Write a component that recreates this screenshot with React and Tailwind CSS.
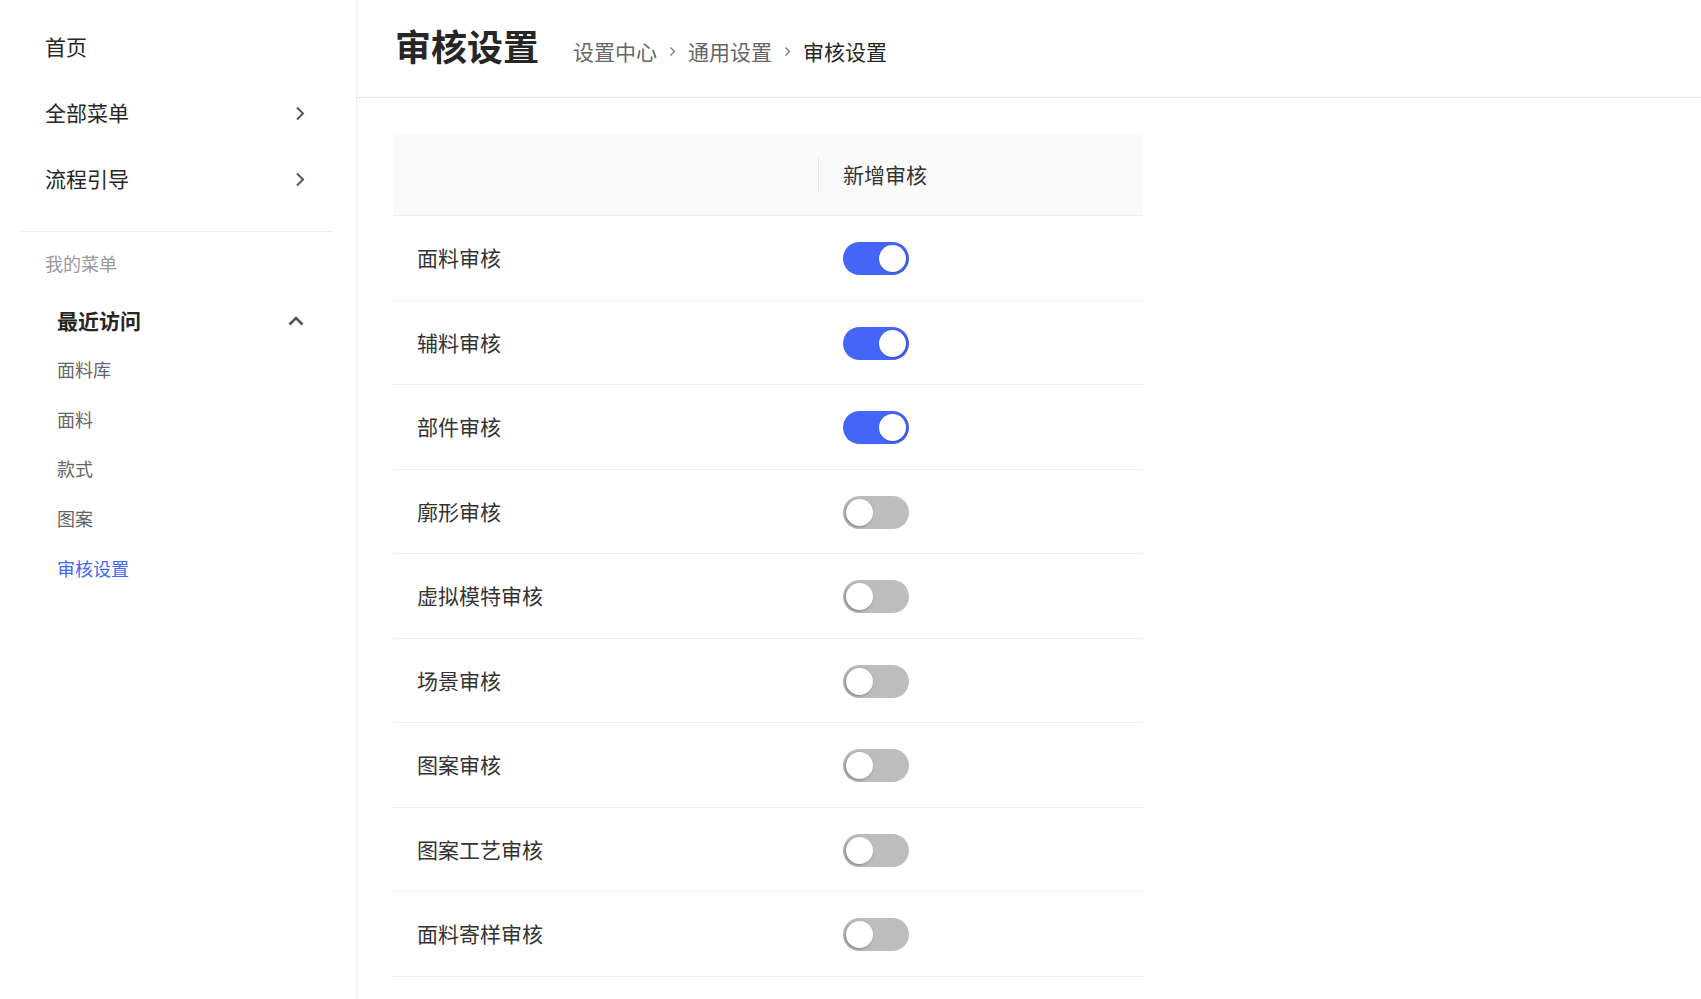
import React, { useState } from "react";

const rows = [
  { name: "面料审核", on: true },
  { name: "辅料审核", on: true },
  { name: "部件审核", on: true },
  { name: "廓形审核", on: false },
  { name: "虚拟模特审核", on: false },
  { name: "场景审核", on: false },
  { name: "图案审核", on: false },
  { name: "图案工艺审核", on: false },
  { name: "面料寄样审核", on: false },
];

const recent = ["面料库", "面料", "款式", "图案", "审核设置"];

function ChevronRight() {
  return (
    <svg width="10" height="15" viewBox="0 0 10 15" className="mt-[2px] text-[#555]">
      <polyline points="2,1.5 8,7.5 2,13.5" fill="none" stroke="currentColor" strokeWidth="2" />
    </svg>
  );
}

function ChevronUp() {
  return (
    <svg width="16" height="10" viewBox="0 0 16 10" className="text-[#555]">
      <polyline points="1.5,8.5 8,2 14.5,8.5" fill="none" stroke="currentColor" strokeWidth="2.6" />
    </svg>
  );
}

function Crumb() {
  return (
    <svg width="7" height="11" viewBox="0 0 7 11" className="mx-[12px] text-[#777]">
      <polyline points="1.5,1.5 5.5,5.5 1.5,9.5" fill="none" stroke="currentColor" strokeWidth="1.3" />
    </svg>
  );
}

function Switch({ checked, onChange }) {
  return (
    <button
      type="button"
      onClick={onChange}
      className={`relative block w-[66px] h-[33px] rounded-full transition-colors ${
        checked ? "bg-[#4565f8]" : "bg-[#bdbdbd]"
      }`}
    >
      <span
        className={`absolute top-[3px] w-[27px] h-[27px] rounded-full bg-white transition-all ${
          checked
            ? "left-[36px] shadow-[1px_1px_3px_rgba(0,0,0,0.2)]"
            : "left-[3px] shadow-[-1px_1px_3px_rgba(0,0,0,0.35)]"
        }`}
      />
    </button>
  );
}

export default function App() {
  const [items, setItems] = useState(rows);

  const toggle = (i) =>
    setItems(items.map((r, idx) => (idx === i ? { ...r, on: !r.on } : r)));

  return (
    <div className="flex h-screen bg-white text-[#333] font-['Noto_Sans_CJK_SC',sans-serif]">
      {/* ===== Sidebar ===== */}
      <aside className="w-[357px] shrink-0 border-r border-[#eeeeee] pt-[13.5px]">
        <div className="h-[66px] flex items-center pl-[45px] text-[21px] text-[#262626]">首页</div>
        <div className="h-[66px] flex items-center justify-between pl-[45px] pr-[51px] text-[21px] text-[#262626]">
          <span>全部菜单</span>
          <ChevronRight />
        </div>
        <div className="h-[66px] flex items-center justify-between pl-[45px] pr-[51px] text-[21px] text-[#262626]">
          <span>流程引导</span>
          <ChevronRight />
        </div>

        <div className="mt-[19px] mx-[21px] w-[311px] border-t border-[#eeeeee]" />

        <div className="h-[64px] flex items-center pl-[45px] text-[18px] text-[#999]">我的菜单</div>

        <div className="h-[49px] flex items-center justify-between pl-[57px] pr-[52px] pt-[1px]">
          <span className="text-[21px] font-bold text-[#262626]">最近访问</span>
          <ChevronUp />
        </div>
        {recent.map((r) => (
          <div
            key={r}
            className={`h-[49.75px] flex items-center pl-[57px] text-[18px] ${
              r === "审核设置" ? "text-[#4565f8]" : "text-[#666]"
            }`}
          >
            {r}
          </div>
        ))}
      </aside>

      {/* ===== Main ===== */}
      <main className="flex-1">
        <header className="h-[98px] border-b border-[#e8e8e8] flex items-start pl-[38px] pt-[27px]">
          <h1 className="text-[36px] leading-none font-bold text-[#262626]">审核设置</h1>
          <div className="ml-[34px] pt-[14px] flex items-center text-[21px] leading-none">
            <span className="text-[#666]">设置中心</span>
            <Crumb />
            <span className="text-[#666]">通用设置</span>
            <Crumb />
            <span className="text-[#262626]">审核设置</span>
          </div>
        </header>

        <div className="pl-[36px] pt-[36px]">
          <div className="w-[750px]">
            <div className="h-[82px] flex items-center bg-[#fafafa] rounded-t-[4px] border-b border-[#eeeeee]">
              <div className="w-[426px] h-[34px] border-r border-[#e5e5e5]" />
              <div className="pl-[24px] text-[21px] text-[#333]">新增审核</div>
            </div>
            {items.map((r, i) => (
              <div key={r.name} className="h-[84.5px] flex items-center border-b border-[#eeeeee]">
                <div className="w-[427px] pl-[24px] text-[21px] text-[#333]">{r.name}</div>
                <div className="pl-[23px] pt-[2px] flex items-center">
                  <Switch checked={r.on} onChange={() => toggle(i)} />
                </div>
              </div>
            ))}
          </div>
        </div>
      </main>
    </div>
  );
}
